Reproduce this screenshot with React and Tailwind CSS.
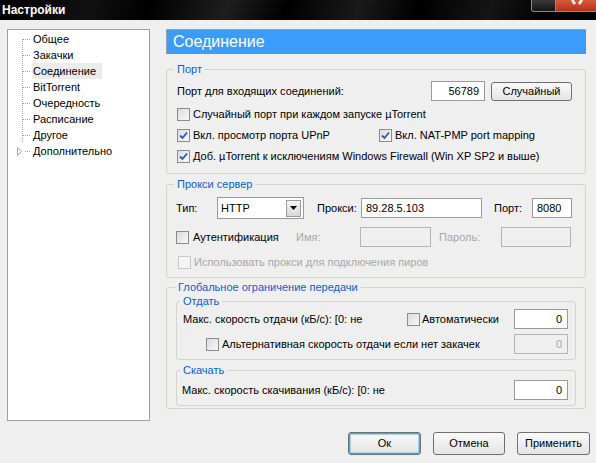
import React from "react";

const font = { fontFamily: '"Liberation Sans", Arial, sans-serif' };

function Check({ checked, disabled }) {
  return (
    <span
      className={`w-[13px] h-[13px] shrink-0 border flex items-center justify-center ${
        disabled
          ? "border-[#c9c9c9] bg-[#f4f4f4]"
          : "border-[#8c8c8c] bg-[linear-gradient(135deg,#dcdcdc,#f8f8f8)]"
      }`}
    >
      {checked && (
        <svg width="9" height="9" viewBox="0 0 9 9">
          <path d="M1 4.5 L3.5 7 L8 1.5" fill="none" stroke="#2f55b4" strokeWidth="1.8" />
        </svg>
      )}
    </span>
  );
}

function Group({ title, className = "", legend = "", children }) {
  return (
    <fieldset className={`border border-[#d4d4cc] rounded-[3px] ${className}`}>
      <legend className={`px-[3px] text-[#0a5fcf] leading-[13px] ${legend}`}>{title}</legend>
      {children}
    </fieldset>
  );
}

function Input({ value, className = "", disabled }) {
  return (
    <div
      className={`border h-[20px] flex items-center justify-end pr-[5px] ${
        disabled ? "border-[#b4b4b4] bg-[#efefef] text-[#a8a8a8]" : "border-[#9a9a9a] bg-white"
      } ${className}`}
    >
      {value}
    </div>
  );
}

function Button({ children, className = "", focus }) {
  return (
    <div
      className={`border border-[#707070] rounded-[3px] flex items-center justify-center bg-[linear-gradient(#fafafa,#e4e4e4)] ${
        focus ? "shadow-[inset_0_0_0_1px_#46a7e6,inset_0_0_0_2px_#9fd3f2]" : ""
      } ${className}`}
    >
      {children}
    </div>
  );
}

const tree = ["Общее", "Закачки", "Соединение", "BitTorrent", "Очередность", "Расписание", "Другое", "Дополнительно"];

function Tree() {
  return (
    <div className="w-[143px] h-[392px] border border-[#a0a0a0] bg-white pt-[1px]">
      {tree.map((t, i) => {
        const last = i === tree.length - 1;
        return (
          <div key={t} className="h-[16px] flex items-center">
            <svg width="24" height="16" className="shrink-0">
              {!last && (
                <line
                  x1="14.5"
                  y1={i === 0 ? 8 : 0}
                  x2="14.5"
                  y2="16"
                  stroke="#a0a0a0"
                  strokeDasharray="1 1"
                />
              )}
              {last ? (
                <>
                  <line x1="17" y1="8.5" x2="23" y2="8.5" stroke="#a0a0a0" strokeDasharray="1 1" />
                  <path d="M9.5 4.5 L13.5 8.5 L9.5 12.5 Z" fill="white" stroke="#a6a6a6" />
                </>
              ) : (
                <line x1="15" y1="8.5" x2="23" y2="8.5" stroke="#a0a0a0" strokeDasharray="1 1" />
              )}
            </svg>
            <span className={`px-[1px] leading-[16px] ${t === "Соединение" ? "bg-[#ececec] pr-[6px]" : ""}`}>
              {t}
            </span>
          </div>
        );
      })}
    </div>
  );
}

export default function App() {
  return (
    <div style={font} className="w-[596px] h-[463px] bg-[#efefef] text-[11px] text-black overflow-hidden relative">
      {/* title bar */}
      <div className="h-[20px] bg-[linear-gradient(105deg,#000_0%,#111_15%,#000_25%,#1e1e1e_38%,#000_48%,#1a1a1a_60%,#000_70%,#151515_82%,#000_92%)] flex items-center pl-[2px]">
        <span className="text-white font-bold text-[12px]">Настройки</span>
      </div>
      <div className="absolute top-0 left-[531px] w-[25px] h-[12px] border border-t-0 border-[#8a8a8a] rounded-bl-[3px] bg-[linear-gradient(#3a3a3a,#151515)]" />
      <div className="absolute top-0 left-[555px] w-[42px] h-[12px] border border-t-0 border-[#8a8a8a] bg-[linear-gradient(#d65a3c,#b7321c)] flex justify-center">
        <svg width="12" height="6" viewBox="0 0 12 6" className="ml-[2px]">
          <path d="M1 0 L4 4 M11 0 L8 4" stroke="white" strokeWidth="2.5" />
        </svg>
      </div>

      <div className="flex pl-[7px] pt-[9px] gap-[16px]">
        <Tree />
        <div className="w-[420px] flex flex-col">
          <div className="h-[25px] border-t border-l border-[#a0a0a0] bg-[#3c9cfc] text-white text-[16px] flex items-center pl-[6px]">
            Соединение
          </div>

          {/* Порт */}
          <Group title="Порт" legend="-ml-[3px]" className="mt-[9px] px-[10px] pb-[6px]">
            <div className="flex items-center h-[20px] mt-[5px]">
              <span className="flex-1">Порт для входящих соединений:</span>
              <Input value="56789" className="w-[54px]" />
              <Button className="w-[81px] h-[19px] ml-[6px] mr-[3px]">Случайный</Button>
            </div>
            <div className="flex items-center h-[21px] mt-[3px] gap-[3px]">
              <Check />
              <span>Случайный порт при каждом запуске µTorrent</span>
            </div>
            <div className="flex items-center h-[21px]">
              <div className="w-[202px] flex items-center gap-[3px]">
                <Check checked />
                <span>Вкл. просмотр порта UPnP</span>
              </div>
              <Check checked />
              <span className="ml-[3px]">Вкл. NAT-PMP port mapping</span>
            </div>
            <div className="flex items-center h-[21px] gap-[3px]">
              <Check checked />
              <span>Доб. µTorrent к исключениям Windows Firewall (Win XP SP2 и выше)</span>
            </div>
          </Group>

          {/* Прокси */}
          <Group title="Прокси сервер" legend="-ml-[2px]" className="mt-[4px] pl-[9px] pb-[8px]">
            <div className="flex items-center h-[22px] mt-[6px]">
              <span className="w-[41px]">Тип:</span>
              <div className="w-[87px] h-[22px] border border-[#9a9a9a] bg-white flex items-center justify-between pl-[3px] pr-[2px]">
                <span>HTTP</span>
                <div className="w-[15px] h-[17px] border border-[#9a9a9a] bg-[linear-gradient(#f4f4f4,#d8d8d8)] flex items-center justify-center">
                  <svg width="7" height="4" viewBox="0 0 7 4">
                    <path d="M0 0 H7 L3.5 4 Z" fill="#000" />
                  </svg>
                </div>
              </div>
              <span className="w-[44px] ml-[13px]">Прокси:</span>
              <div className="w-[121px] h-[20px] border border-[#9a9a9a] bg-white flex items-center pl-[4px]">89.28.5.103</div>
              <span className="w-[38px] ml-[12px]">Порт:</span>
              <div className="w-[40px] h-[20px] border border-[#9a9a9a] bg-white flex items-center pl-[4px]">8080</div>
            </div>
            <div className="flex items-center h-[20px] mt-[8px]">
              <div className="w-[120px] flex items-center gap-[4px]">
                <Check />
                <span>Аутентификация</span>
              </div>
              <span className="w-[64px] text-[#a8a8a8]">Имя:</span>
              <Input disabled className="w-[71px]" />
              <span className="w-[62px] ml-[8px] text-[#a8a8a8]">Пароль:</span>
              <Input disabled className="w-[70px]" />
            </div>
            <div className="flex items-center h-[13px] mt-[9px] gap-[3px] pl-[2px] text-[#a8a8a8]">
              <Check disabled />
              <span>Использовать прокси для подключения пиров</span>
            </div>
          </Group>

          {/* Ограничение */}
          <Group title="Глобальное ограничение передачи" legend="-ml-[1px]" className="mt-[3px] px-[9px] pb-[2px]">
            <Group title="Отдать" legend="-ml-[3px]" className="mt-[1px] pl-[6px] pr-[7px] pb-[5px]">
              <div className="flex items-center h-[20px] mt-[1px]">
                <span className="w-[224px]">Макс. скорость отдачи (кБ/с): [0: не</span>
                <Check />
                <span className="ml-[2px] flex-1">Автоматически</span>
                <Input value="0" className="w-[54px]" />
              </div>
              <div className="flex items-center h-[20px] mt-[5px]">
                <div className="w-[23px]" />
                <Check />
                <span className="ml-[3px] w-[258px] overflow-hidden whitespace-nowrap">
                  Альтернативная скорость отдачи если нет закачек
                </span>
                <div className="flex-1" />
                <Input disabled value="0" className="w-[54px]" />
              </div>
            </Group>
            <Group title="Скачать" legend="-ml-[2px]" className="mt-[4px] pl-[5px] pr-[7px] pb-[5px]">
              <div className="flex items-center h-[20px] mt-[3px]">
                <span className="flex-1">Макс. скорость скачивания (кБ/с): [0: не</span>
                <Input value="0" className="w-[54px]" />
              </div>
            </Group>
          </Group>
        </div>
      </div>

      <div className="flex justify-end gap-[12px] pr-[6px] mt-[11px]">
        <Button focus className="w-[73px] h-[23px]">Ок</Button>
        <Button className="w-[72px] h-[23px]">Отмена</Button>
        <Button className="w-[73px] h-[23px]">Применить</Button>
      </div>
    </div>
  );
}
